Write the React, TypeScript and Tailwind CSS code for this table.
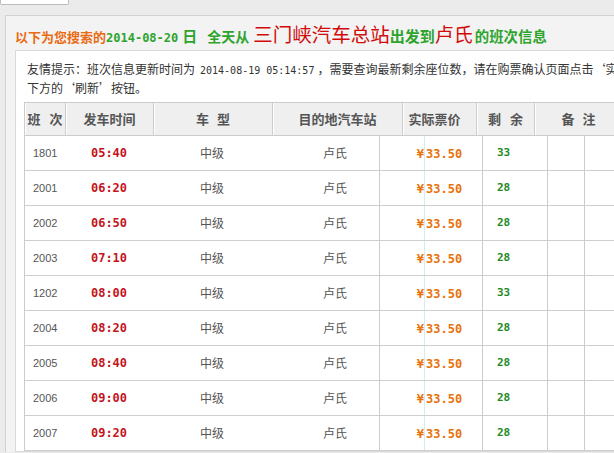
import React from "react";

const ROWS = [
  { no: "1801", time: "05:40", left: "33" },
  { no: "2001", time: "06:20", left: "28" },
  { no: "2002", time: "06:50", left: "28" },
  { no: "2003", time: "07:10", left: "28" },
  { no: "1202", time: "08:00", left: "33" },
  { no: "2004", time: "08:20", left: "28" },
  { no: "2005", time: "08:40", left: "28" },
  { no: "2006", time: "09:00", left: "28" },
  { no: "2007", time: "09:20", left: "28" },
];

function HeadCell({ w, children, extra = "" }: { w: string; children: React.ReactNode; extra?: string }) {
  return (
    <div
      className={`${w} flex h-full shrink-0 items-center justify-center border-r border-[#cccccc] shadow-[inset_1px_0_0_#ffffff] ${extra}`}
    >
      {children}
    </div>
  );
}

export default function App() {
  return (
    <div className="h-[453px] w-[614px] overflow-hidden bg-[#ebebeb] font-['Noto_Sans_CJK_SC',sans-serif]">
      <div className="h-[15px]">
        <div className="h-[5px] w-[69px] rounded-b-[2px] border border-t-0 border-[#bdbdbd] bg-white" />
      </div>

      <div className="ml-[5px] w-[700px] border-l border-t border-[#d2d2d2] bg-[#f3f3f3] pl-[9px]">
        {/* search summary */}
        <div className="flex h-[34px] items-baseline whitespace-nowrap pt-[8px] font-bold leading-none">
          <span className="text-[13px] text-[#ea6a12]">以下为您搜索的</span>
          <span className="font-['DejaVu_Sans_Mono',monospace] text-[12px] text-[#2ea42e]">2014-08-20</span>
          <span className="ml-[4px] text-[15px] text-[#2ea42e]">日</span>
          <span className="ml-[10px] text-[14px] text-[#2ea42e]">全天从</span>
          <span className="ml-[4px] text-[19.5px] font-normal text-[#d10a0a]">三门峡汽车总站</span>
          <span className="text-[15px] text-[#2ea42e]">出发到</span>
          <span className="text-[19px] font-normal text-[#d10a0a]">卢氏</span>
          <span className="ml-[2px] text-[14.4px] text-[#2ea42e]">的班次信息</span>
        </div>

        <div className="border border-[#d9d9d9] bg-white pl-[8px] pt-[9px]">
          <div className="whitespace-nowrap pl-[3px] text-[12px] leading-[17px] text-[#333333]">
            友情提示：班次信息更新时间为
            <span className="ml-[5px] font-['DejaVu_Sans_Mono',monospace] text-[10px]">2014-08-19 05:14:57</span>
            <span className="ml-[3px]">，需要查询最新剩余座位数，请在购票确认页面点击‘实时余票’</span>
            <br />
            下方的‘刷新’按钮。
          </div>

          {/* timetable */}
          <div className="mt-[6px] w-[640px] border-l border-[#cccccc]">
            <div className="flex h-[34px] border-y border-[#cccccc] bg-[#efefef] text-[13px] font-bold text-[#555555]">
              <HeadCell w="w-[41px]">
                <span>班</span>
                <span className="ml-[9px]">次</span>
              </HeadCell>
              <HeadCell w="w-[88px]">发车时间</HeadCell>
              <HeadCell w="w-[119px]">
                <span>车</span>
                <span className="ml-[8px]">型</span>
              </HeadCell>
              <HeadCell w="w-[130px]">目的地汽车站</HeadCell>
              <HeadCell w="w-[74px]" extra="pr-[10px]">实际票价</HeadCell>
              <HeadCell w="w-[58px]">
                <span>剩</span>
                <span className="ml-[9px]">余</span>
              </HeadCell>
              <HeadCell w="w-[88px]">
                <span>备</span>
                <span className="ml-[8px]">注</span>
              </HeadCell>
            </div>

            {ROWS.map((r) => (
              <div key={r.no} className="flex h-[35px] items-stretch border-b border-[#cfcfcf] text-[12px] text-[#555555]">
                <div className="flex w-[40px] shrink-0 items-center pl-[8px] font-['Liberation_Sans',sans-serif] text-[11px]">
                  {r.no}
                </div>
                <div className="flex w-[88px] shrink-0 items-center justify-center font-['DejaVu_Sans_Mono',monospace] font-bold text-[#c4141c]">
                  {r.time}
                </div>
                <div className="flex w-[119px] shrink-0 items-center pl-[47px]">中级</div>
                <div className="flex w-[108px] shrink-0 items-center border-r border-[#cccccc] pl-[51px]">卢氏</div>
                <div className="flex w-[45px] shrink-0 items-center justify-end border-r border-[#d3ecf4] pt-[2px] font-['DejaVu_Sans_Mono',monospace] font-bold text-[#e8730e]">
                  ¥
                </div>
                <div className="flex w-[58px] shrink-0 items-center border-r border-[#cccccc] pl-[1px] pt-[2px] font-['DejaVu_Sans_Mono',monospace] font-bold text-[#e8730e]">
                  33.50
                </div>
                <div className="flex w-[65px] shrink-0 items-center border-r border-[#cccccc] pl-[14px] font-['DejaVu_Sans_Mono',monospace] text-[11px] font-bold text-[#1e8a1e]">
                  {r.left}
                </div>
                <div className="w-[37px] shrink-0 border-r border-[#cccccc]" />
                <div className="flex-1" />
              </div>
            ))}
          </div>
        </div>
      </div>
    </div>
  );
}
